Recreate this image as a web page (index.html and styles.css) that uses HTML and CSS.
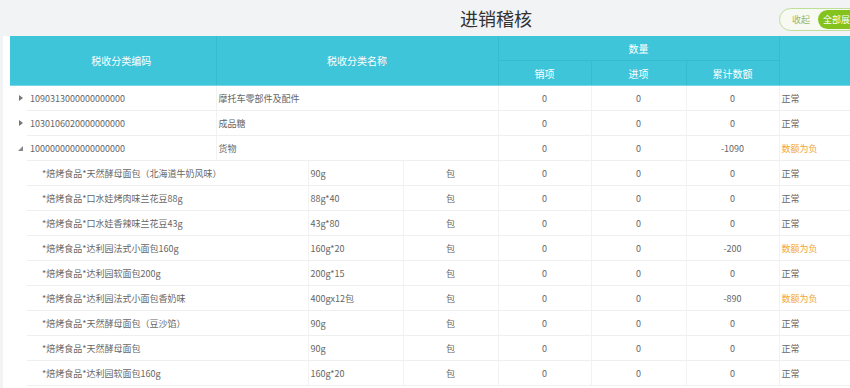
FILE: index.html
```html
<!DOCTYPE html>
<html lang="zh-CN">
<head>
<meta charset="utf-8">
<title>进销稽核</title>
<link rel="stylesheet" href="styles.css">
</head>
<body>
<div class="topbar">
  <h1 class="title">进销稽核</h1>
  <div class="toggle">
    <span class="toggle-off">收起</span>
    <span class="toggle-on">全部展开</span>
  </div>
</div>
<div class="panel">
  <table class="grid">
    <colgroup>
      <col class="c-gut"><col class="c-code"><col class="c-name"><col class="c-spec"><col class="c-unit">
      <col class="c-num"><col class="c-num2"><col class="c-num"><col class="c-stat">
    </colgroup>
    <thead>
      <tr>
        <th colspan="2" rowspan="2" class="first">税收分类编码</th>
        <th colspan="3" rowspan="2">税收分类名称</th>
        <th colspan="3">数量</th>
        <th rowspan="2" class="last"></th>
      </tr>
      <tr>
        <th>销项</th>
        <th>进项</th>
        <th>累计数额</th>
      </tr>
    </thead>
    <tbody>
      <tr class="parent">
        <td class="gut"><span class="arrow closed"></span></td>
        <td class="code">1090313000000000000</td>
        <td colspan="3" class="txt">摩托车零部件及配件</td>
        <td class="num">0</td><td class="num">0</td><td class="num">0</td>
        <td class="stat">正常</td>
      </tr>
      <tr class="parent">
        <td class="gut"><span class="arrow closed"></span></td>
        <td class="code">1030106020000000000</td>
        <td colspan="3" class="txt">成品糖</td>
        <td class="num">0</td><td class="num">0</td><td class="num">0</td>
        <td class="stat">正常</td>
      </tr>
      <tr class="parent">
        <td class="gut"><span class="arrow open"></span></td>
        <td class="code">1000000000000000000</td>
        <td colspan="3" class="txt">货物</td>
        <td class="num">0</td><td class="num">0</td><td class="num">-1090</td>
        <td class="stat warn">数额为负</td>
      </tr>
      <tr class="child">
        <td class="gut"></td>
        <td colspan="2" class="cname">*焙烤食品*天然酵母面包（北海道牛奶风味）</td>
        <td class="txt">90g</td><td class="unit">包</td>
        <td class="num">0</td><td class="num">0</td><td class="num">0</td>
        <td class="stat">正常</td>
      </tr>
      <tr class="child">
        <td class="gut"></td>
        <td colspan="2" class="cname">*焙烤食品*口水娃烤肉味兰花豆88g</td>
        <td class="txt">88g*40</td><td class="unit">包</td>
        <td class="num">0</td><td class="num">0</td><td class="num">0</td>
        <td class="stat">正常</td>
      </tr>
      <tr class="child">
        <td class="gut"></td>
        <td colspan="2" class="cname">*焙烤食品*口水娃香辣味兰花豆43g</td>
        <td class="txt">43g*80</td><td class="unit">包</td>
        <td class="num">0</td><td class="num">0</td><td class="num">0</td>
        <td class="stat">正常</td>
      </tr>
      <tr class="child">
        <td class="gut"></td>
        <td colspan="2" class="cname">*焙烤食品*达利园法式小面包160g</td>
        <td class="txt">160g*20</td><td class="unit">包</td>
        <td class="num">0</td><td class="num">0</td><td class="num">-200</td>
        <td class="stat warn">数额为负</td>
      </tr>
      <tr class="child">
        <td class="gut"></td>
        <td colspan="2" class="cname">*焙烤食品*达利园软面包200g</td>
        <td class="txt">200g*15</td><td class="unit">包</td>
        <td class="num">0</td><td class="num">0</td><td class="num">0</td>
        <td class="stat">正常</td>
      </tr>
      <tr class="child">
        <td class="gut"></td>
        <td colspan="2" class="cname">*焙烤食品*达利园法式小面包香奶味</td>
        <td class="txt">400gx12包</td><td class="unit">包</td>
        <td class="num">0</td><td class="num">0</td><td class="num">-890</td>
        <td class="stat warn">数额为负</td>
      </tr>
      <tr class="child">
        <td class="gut"></td>
        <td colspan="2" class="cname">*焙烤食品*天然酵母面包（豆沙馅）</td>
        <td class="txt">90g</td><td class="unit">包</td>
        <td class="num">0</td><td class="num">0</td><td class="num">0</td>
        <td class="stat">正常</td>
      </tr>
      <tr class="child">
        <td class="gut"></td>
        <td colspan="2" class="cname">*焙烤食品*天然酵母面包</td>
        <td class="txt">90g</td><td class="unit">包</td>
        <td class="num">0</td><td class="num">0</td><td class="num">0</td>
        <td class="stat">正常</td>
      </tr>
      <tr class="child">
        <td class="gut"></td>
        <td colspan="2" class="cname">*焙烤食品*达利园软面包160g</td>
        <td class="txt">160g*20</td><td class="unit">包</td>
        <td class="num">0</td><td class="num">0</td><td class="num">0</td>
        <td class="stat">正常</td>
      </tr>
    </tbody>
  </table>
</div>
</body>
</html>
```

FILE: styles.css
```css
html, body {
  margin: 0;
  padding: 0;
}
body {
  background: #f2f3f5;
  font-family: "Noto Sans CJK SC", "Microsoft YaHei", sans-serif;
  color: #666;
  overflow: hidden;
  width: 850px;
  height: 388px;
}
.topbar {
  height: 36px;
  display: flex;
  align-items: center;
}
.title {
  margin: 0 0 0 460px;
  font-size: 18px;
  font-weight: normal;
  color: #333;
  line-height: 22px;
}
.toggle {
  margin-left: auto;
  margin-right: -54px;
  margin-top: 3px;
  width: 125px;
  height: 23px;
  box-sizing: border-box;
  border: 1px solid #bfdf98;
  border-radius: 12px;
  display: flex;
  align-items: center;
  padding: 0 1px 0 12px;
  font-size: 9px;
  background: #f7f9f3;
  white-space: nowrap;
}
.toggle-off {
  color: #97b86a;
  margin-right: 8px;
}
.toggle-on {
  background: #84c21c;
  color: #fff;
  height: 19px;
  line-height: 19px;
  border-radius: 10px;
  padding: 0 5px;
  flex: 1;
}
.panel {
  background: #fff;
  margin-left: 3px;
  padding-left: 7px;
  width: 900px;
  height: 360px;
}
.grid {
  border-collapse: collapse;
  table-layout: fixed;
  width: 860px;
  font-size: 9px;
}
.c-gut { width: 17px; }
.c-code { width: 189px; }
.c-name { width: 92px; }
.c-spec { width: 95px; }
.c-unit { width: 95px; }
.c-num { width: 93px; }
.c-num2 { width: 95px; }
.c-stat { width: 91px; }

thead th {
  background: #3fc5da;
  color: #fff;
  font-weight: normal;
  font-size: 10px;
  height: 24px;
  padding: 0;
  border: 1px solid #39bbcf;
  text-align: center;
}
thead tr:first-child th { border-top: none; }
thead tr:last-child th, thead th[rowspan="2"] { border-bottom: 1px solid #78d6e5; }
thead th.first { border-left: none; padding-left: 17px; }
thead th.last { border-right: none; }

tbody td {
  height: 24px;
  padding: 0;
  border: 1px solid #efefef;
  border-left-color: #f2f2f2;
  border-right-color: #f2f2f2;
  white-space: nowrap;
  overflow: hidden;
  vertical-align: middle;
}
tbody td.gut {
  border: none;
  text-align: left;
}
tbody td.code { padding-left: 3px; border-left: none; }
tbody td.cname { padding-left: 15px; border-left: none; }
tbody td.txt { padding-left: 2px; }
tbody td.unit { text-align: center; }
tbody td.num { text-align: center; }
tbody td.stat { padding-left: 2px; border-left-color: #e6e6e6; border-right: none; }
tbody td.warn { color: #f3a63a; }

.arrow {
  display: block;
  width: 0;
  height: 0;
  margin-left: 9px;
}
.arrow.closed {
  border-top: 3px solid transparent;
  border-bottom: 3px solid transparent;
  border-left: 4px solid #777;
}
.arrow.open {
  margin-left: 8px;
  border-bottom: 5px solid #888;
  border-left: 5px solid transparent;
}
```
